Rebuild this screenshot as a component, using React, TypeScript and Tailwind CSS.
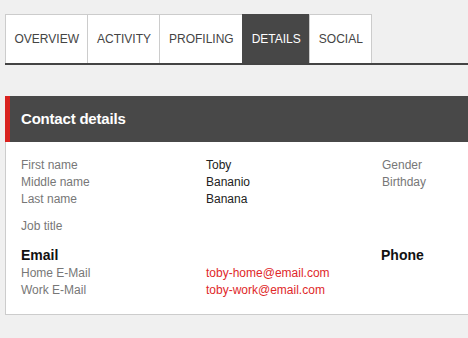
export default function App() {
  const tabs = ["OVERVIEW", "ACTIVITY", "PROFILING", "DETAILS", "SOCIAL"];
  const active = "DETAILS";

  return (
    <div
      className="min-h-[338px] w-[468px] overflow-hidden bg-[#f0f0f0] pl-[5px] pt-[14px]"
      style={{ fontFamily: '"Liberation Sans", Arial, sans-serif' }}
    >
      {/* tabs */}
      <div className="flex border-b-2 border-[#444]">
        {tabs.map((tab) => (
          <div
            key={tab}
            className={
              tab === active
                ? "-ml-px flex h-[49px] items-center border border-b-0 border-[#474747] bg-[#474747] px-[8.5px] text-[12px] text-white"
                : "-ml-px flex h-[49px] items-center border border-b-0 border-[#cccccc] bg-white px-[8.5px] text-[12px] text-[#444] first:ml-0"
            }
          >
            {tab}
          </div>
        ))}
      </div>

      {/* contact details */}
      <div className="mt-[31px]">
        <div className="flex h-[46px] items-center border-l-[5px] border-[#d9221f] bg-[#484848] pl-[11px]">
          <h2 className="text-[15px] font-bold tracking-[-0.2px] text-white">Contact details</h2>
        </div>
        <div className="border-b border-l border-[#cccccc] bg-white pb-[15px] pl-[15px] pt-[15px] text-[12px] leading-[17px]">
          <div className="grid grid-cols-[185px_176px_1fr]">
            <div className="text-[#777]">
              <div>First name</div>
              <div>Middle name</div>
              <div>Last name</div>
            </div>
            <div className="text-[#222]">
              <div>Toby</div>
              <div>Bananio</div>
              <div>Banana</div>
            </div>
            <div className="text-[#777]">
              <div>Gender</div>
              <div>Birthday</div>
            </div>
          </div>
          <div className="mt-[10px] text-[#777]">Job title</div>

          <div className="mt-[12px] grid grid-cols-[185px_175px_1fr]">
            <div>
              <div className="h-[18px] text-[14px] font-bold leading-[17px] text-[#111]">Email</div>
              <div className="text-[#777]">Home E-Mail</div>
              <div className="text-[#777]">Work E-Mail</div>
            </div>
            <div className="text-[#e0282a]">
              <div className="h-[18px]" />
              <div>toby-home@email.com</div>
              <div>toby-work@email.com</div>
            </div>
            <div>
              <div className="text-[14px] font-bold leading-[17px] text-[#111]">Phone</div>
            </div>
          </div>
        </div>
      </div>
    </div>
  );
}
